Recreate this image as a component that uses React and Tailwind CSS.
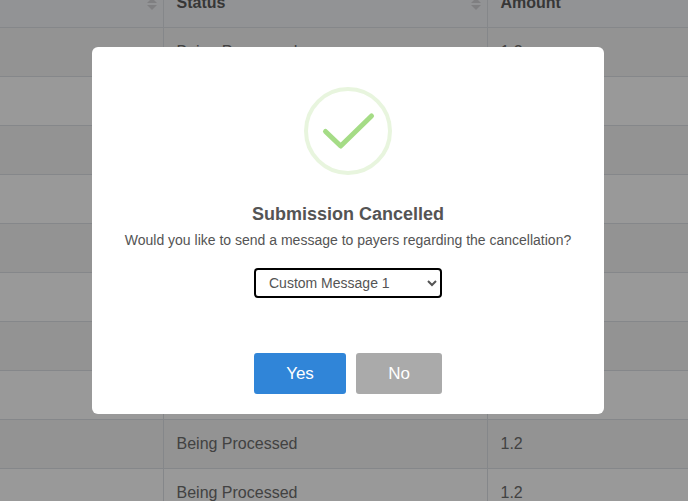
const rows = Array.from({ length: 10 });

const SortArrow = () => (
  <span className="absolute top-[20px] right-[6px] flex flex-col gap-[2px]">
    <span className="h-0 w-0 border-x-[5px] border-b-[5px] border-x-transparent border-b-[#d4d4d8]"></span>
    <span className="h-0 w-0 border-x-[5px] border-t-[5px] border-x-transparent border-t-[#d4d4d8]"></span>
  </span>
);

const App = () => (
  <div className="relative h-[501px] w-[688px] overflow-hidden bg-white font-['Liberation_Sans',Arial,sans-serif] text-[#6e6e6e]">
    <table className="-mt-[22px] w-[688px] table-fixed border-collapse text-base">
      <thead>
        <tr className="h-[49px] border-b border-[#dee2e6] bg-[#f4f6f8] text-left text-[#5c5c5c]">
          <th className="relative w-[163px] border-r border-[#dee2e6]">
            <SortArrow />
          </th>
          <th className="relative w-[324px] border-r border-[#dee2e6] px-[13px] pt-[2px] font-bold">
            Status
            <SortArrow />
          </th>
          <th className="px-[13px] pt-[2px] font-bold">Amount</th>
        </tr>
      </thead>
      <tbody>
        {rows.map((_, i) => (
          <tr key={i} className="h-[49px] border-b border-[#dee2e6] odd:bg-[#f5f5f5]">
            <td className="border-r border-[#dee2e6]"></td>
            <td className="border-r border-[#dee2e6] px-[13px]">Being Processed</td>
            <td className="px-[13px]">1.2</td>
          </tr>
        ))}
      </tbody>
    </table>

    {/* overlay + modal */}
    <div className="absolute inset-0 flex items-start justify-center bg-black/40 pt-[47px] pl-2">
      <div className="flex h-[367px] w-[512px] flex-col items-center rounded-md bg-white pt-10 text-[#545454]">
        <div className="flex h-[88px] w-[88px] items-center justify-center rounded-full border-4 border-[#e8f5de]">
          <svg viewBox="0 0 88 88" className="h-[88px] w-[88px] shrink-0" fill="none">
            <path d="M21.5 44.5 L36.7 59 L67.5 29" stroke="#a5dc86" strokeWidth="5" strokeLinecap="round" strokeLinejoin="round" />
          </svg>
        </div>
        <h2 className="mt-[29px] text-lg leading-[21px] font-bold">Submission Cancelled</h2>
        <p className="mt-[5px] text-sm leading-[20px]">Would you like to send a message to payers regarding the cancellation?</p>
        <select className="mt-[18px] h-[30px] w-[188px] rounded-[4px] border-2 border-black bg-white pl-[9px] text-sm text-[#545454]" defaultValue="Custom Message 1">
          <option>Custom Message 1</option>
        </select>
        <div className="mt-[55px] flex gap-[10px]">
          <button className="h-[41px] w-[92px] rounded-[3px] bg-[#3085d8] text-[17px] text-white">Yes</button>
          <button className="h-[41px] w-[86px] rounded-[3px] bg-[#aaaaaa] text-[17px] text-white">No</button>
        </div>
      </div>
    </div>
  </div>
);

export default App;
